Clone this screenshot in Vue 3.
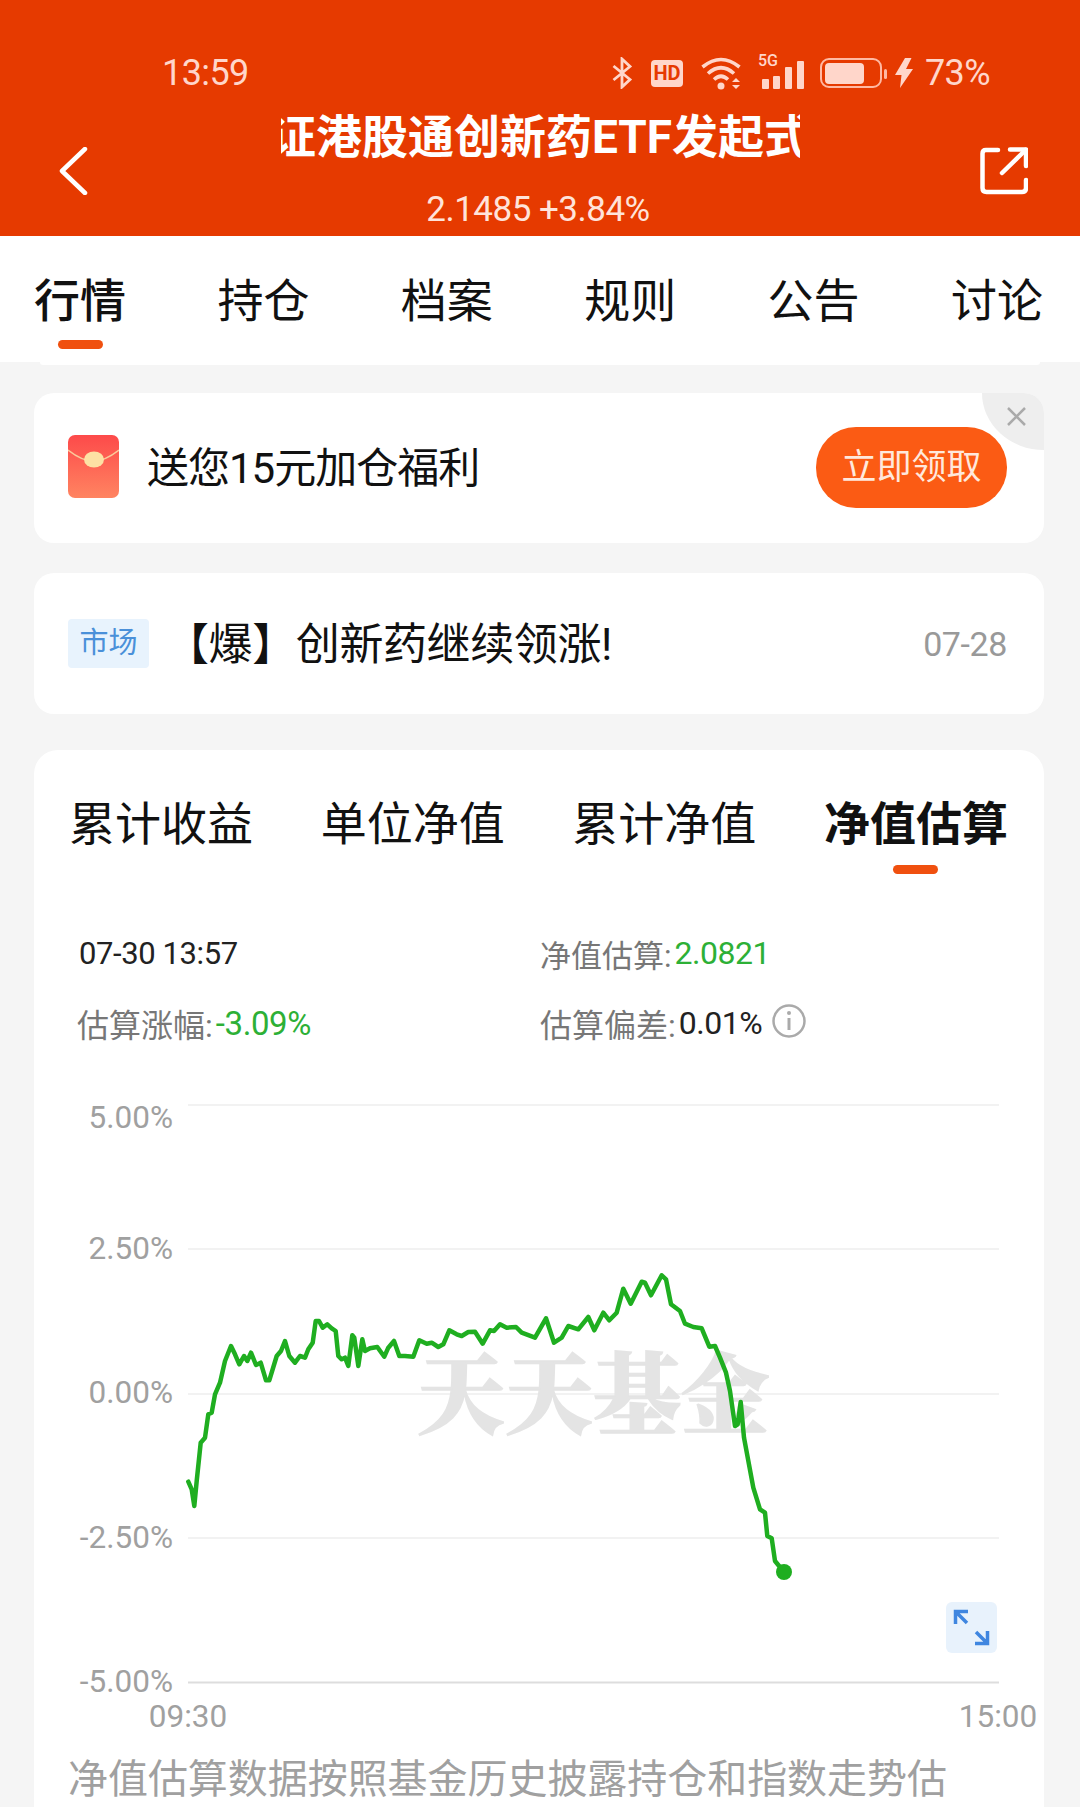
<script setup>
const tabs = ['行情', '持仓', '档案', '规则', '公告', '讨论']
const chartTabs = ['累计收益', '单位净值', '累计净值', '净值估算']

const left = [[55,722],[65,745],[73,795],[80,720],[92,605],[105,590],[115,520],[125,515],[135,460],[150,425],[165,360],[183,315],[195,340],[208,370],[222,345],[232,360],[243,335],[258,372],[272,365],[288,418],[298,418],[320,345],[333,330],[345,300],[358,345],[375,365],[390,345],[405,350],[415,325],[428,305],[437,240],[447,240],[458,260],[472,250],[485,262],[497,270],[505,345],[515,355],[525,350],[535,375],[547,283],[553,290],[565,375],[577,295],[585,330],[600,322],[622,318],[643,347],[655,320],[672,300],[688,345],[705,345],[730,347],[748,298],[770,308],[785,305],[805,318],[820,310],[838,268],[860,280],[875,285],[895,273]]
const right = [[15,272],[38,308],[60,268],[72,270],[90,250],[110,260],[138,258],[155,275],[195,290],[228,232],[252,305],[275,290],[295,255],[325,265],[355,228],[373,268],[400,215],[418,238],[440,215],[460,143],[482,188],[515,122],[525,125],[543,163],[575,103],[588,115],[603,190],[630,210],[645,248],[670,258],[695,262],[718,317],[735,315],[750,350],[768,395],[780,450],[795,555],[803,550],[812,483],[822,590],[850,740],[870,805],[885,815],[892,885],[905,892],[915,960],[942,993]]
const curve = [
  ...left.map(([x, y]) => [170 + x / 3, 1240 + y / 3]),
  ...right.map(([x, y]) => [470 + x / 3, 1240 + y / 3])
].map(([x, y]) => `${x.toFixed(1)},${y.toFixed(1)}`).join(' ')

const gridLines = [1104, 1248, 1393, 1537]
const axisLabels = [
  { text: '5.00%', y: 1116 },
  { text: '2.50%', y: 1247 },
  { text: '0.00%', y: 1391 },
  { text: '-2.50%', y: 1536 },
  { text: '-5.00%', y: 1680 }
]
</script>

<template>
  <div class="page">
    <header class="header">
      <div class="status">
        <span class="time">13:59</span>
        <div class="status-right">
          <svg class="s-bt" width="21" height="32" viewBox="0 0 21 32" fill="none" stroke="#ffd6ca" stroke-width="2.800">
            <path d="M1.500 9 L18 22.500 L10 30 V2 L18 9.500 L1.500 23" />
          </svg>
          <svg class="s-hd" width="32" height="27" viewBox="0 0 32 27">
            <rect width="32" height="27" rx="4" fill="#ffd6ca" />
            <text x="16" y="20" text-anchor="middle" class="hd-text">HD</text>
          </svg>
          <svg class="s-wifi" width="42" height="34" viewBox="0 0 42 34" fill="none" stroke="#ffd6ca" stroke-width="3.600">
            <path d="M1.500 11 Q20 -4 38.500 11" />
            <path d="M7 17.500 Q20 6 33 17.500" />
            <path d="M13 23.500 Q20 17 27 23.500" />
            <circle cx="20" cy="30" r="3.500" fill="#ffd6ca" stroke="none" />
            <path d="M35 22 L39 26 H31 Z M31 29 H39 L35 33 Z" fill="#ffd6ca" stroke="none" />
          </svg>
          <div class="s-signal">
            <span class="five-g">5G</span>
            <svg width="43" height="29" viewBox="0 0 43 29" fill="#ffd6ca">
              <rect x="0" y="19" width="7" height="10" rx="1" />
              <rect x="11" y="16" width="7" height="13" rx="1" />
              <rect x="23" y="7" width="7" height="22" rx="1" />
              <rect x="35" y="1" width="7" height="28" rx="1" />
            </svg>
          </div>
          <svg class="s-bat" width="67" height="30" viewBox="0 0 67 30" fill="none">
            <rect x="1" y="1" width="60" height="28" rx="8" stroke="#ffb9a3" stroke-width="2" />
            <rect x="5" y="5" width="39" height="21" rx="4" fill="#ffd6ca" />
            <rect x="64" y="11" width="3" height="10" rx="1.500" fill="#ffb9a3" />
          </svg>
          <svg class="s-flash" width="18" height="30" viewBox="0 0 18 30" fill="#ffd6ca">
            <path d="M10 0 L0 17 H6.500 L5 30 L18 11 H11 L16.500 0 Z" />
          </svg>
          <span class="pct">73%</span>
        </div>
      </div>
      <div class="nav">
        <svg class="nav-icon" width="48" height="48" viewBox="0 0 48 48" fill="none" stroke="#fff" stroke-width="4.500" stroke-linecap="round" stroke-linejoin="round">
          <path d="M33 2 L10 24 L33 46" />
        </svg>
        <div class="nav-mid">
          <div class="title"><span>证港股通创新药ETF发起式</span></div>
          <div class="sub">2.1485 +3.84%</div>
        </div>
        <svg class="nav-icon" width="48" height="48" viewBox="0 0 48 48" fill="none" stroke="#fff" stroke-width="4.500" stroke-linecap="round" stroke-linejoin="round">
          <path d="M18 3 H6 Q2.500 3 2.500 6.500 V41 Q2.500 45 6.500 45 H42 Q46 45 46 41 V33" />
          <path d="M22 26 L45.500 3" />
          <path d="M30 2.500 H46 V19" />
        </svg>
      </div>
    </header>

    <nav class="tabs">
      <div v-for="(t, i) in tabs" :key="t" class="tab" :class="{ on: i === 0 }">
        <span>{{ t }}</span>
        <i class="bar"></i>
      </div>
    </nav>
    <div class="lip"></div>

    <main class="main">
      <section class="card promo">
        <svg class="packet" width="51" height="63" viewBox="0 0 51 63">
          <defs>
            <linearGradient id="pk" x1="0" y1="0" x2="0" y2="1">
              <stop offset="0" stop-color="#fd4a4a" />
              <stop offset="1" stop-color="#ff8461" />
            </linearGradient>
          </defs>
          <rect width="51" height="63" rx="7" fill="url(#pk)" />
          <path d="M0 15 Q14 26 25.500 26 Q37 26 51 15" fill="none" stroke="#fbc99a" stroke-width="1.500" />
          <ellipse cx="26" cy="24.500" rx="10" ry="8" fill="#fde1a4" />
        </svg>
        <span class="promo-text">送您15元加仓福利</span>
        <button class="claim">立即领取</button>
        <div class="corner">
          <svg width="19" height="19" viewBox="0 0 19 19" stroke="#aaa" stroke-width="2.500" fill="none">
            <path d="M1 1 L18 18 M18 1 L1 18" />
          </svg>
        </div>
      </section>

      <section class="card news">
        <span class="tag">市场</span>
        <span class="news-text">【爆】创新药继续领涨!</span>
        <span class="date">07-28</span>
      </section>

      <section class="card chart-card">
        <div class="ctabs">
          <div v-for="(t, i) in chartTabs" :key="t" class="ctab" :class="{ on: i === 3 }">
            <span>{{ t }}</span>
            <i class="bar"></i>
          </div>
        </div>

        <div class="stats">
          <div class="stat dark stamp">07-30 13:57</div>
          <div class="stat est"><span class="lbl">净值估算:</span><span class="green">2.0821</span></div>
          <div class="stat wide"><span class="lbl">估算涨幅:</span><span class="green">-3.09%</span></div>
          <div class="stat">
            <span class="lbl">估算偏差:</span><span class="dark val">0.01%</span>
            <svg class="info" width="34" height="34" viewBox="0 0 34 34" fill="none" stroke="#aaa" stroke-width="2.500">
              <circle cx="17" cy="17" r="15.500" />
              <path d="M17 14 V26" stroke-width="3" />
              <circle cx="17" cy="9" r="2" fill="#aaa" stroke="none" />
            </svg>
          </div>
        </div>

        <svg class="chart" width="1010" height="650" viewBox="34 1090 1010 650">
          <line v-for="y in gridLines" :key="y" x1="188" x2="999" :y1="y" :y2="y" stroke="#eeeeee" stroke-width="1.500" />
          <line x1="188" x2="999" y1="1681.500" y2="1681.500" stroke="#dddddd" stroke-width="2" />
          <text x="417" y="1425" class="mark">天天基金</text>
          <text v-for="l in axisLabels" :key="l.text" x="173" :y="l.y + 11" text-anchor="end" class="axis">{{ l.text }}</text>
          <text x="188" y="1726" text-anchor="middle" class="axis">09:30</text>
          <text x="998" y="1726" text-anchor="middle" class="axis">15:00</text>
          <polyline :points="curve" fill="none" stroke="#1fae20" stroke-width="4.500" stroke-linejoin="round" stroke-linecap="round" />
          <circle cx="784" cy="1571" r="8" fill="#1fae20" />
          <rect x="946" y="1601" width="51" height="51" rx="6" fill="#e8f2fc" />
          <g fill="none" stroke="#3f86e0" stroke-width="3.500">
            <path d="M968 1610.500 H955.500 V1623 M955.500 1610.500 L967 1622" />
            <path d="M975 1642.500 H987.500 V1630 M987.500 1642.500 L976 1631" />
          </g>
        </svg>

        <p class="note">净值估算数据按照基金历史披露持仓和指数走势估</p>
      </section>
    </main>
  </div>
</template>

<style scoped>
.page {
  width: 1080px;
  height: 1807px;
  overflow: hidden;
  background: #f5f5f5;
  font-family: Roboto, "Noto Sans CJK SC", sans-serif;
  color: #111;
}
.header {
  height: 236px;
  background: #e63a00;
  box-sizing: border-box;
  padding-top: 53px;
}
.status {
  height: 40px;
  display: flex;
  align-items: center;
  padding: 0 90px 0 162px;
  justify-content: space-between;
  color: #ffd6ca;
}
.time, .pct {
  font-size: 36px;
  font-weight: 400;
  letter-spacing: -0.6px;
  line-height: 40px;
}
.status-right {
  display: flex;
  align-items: center;
}
.s-bt { margin-right: 18px; }
.s-hd { margin-right: 18px; }
.hd-text {
  font-size: 20px;
  font-weight: 700;
  fill: #e63a00;
}
.s-wifi { margin-right: 19px; }
.s-signal {
  position: relative;
  width: 43px;
  height: 29px;
  margin-right: 15px;
  margin-top: 3px;
}
.five-g {
  position: absolute;
  left: -4px;
  top: -7px;
  font-size: 16px;
  line-height: 15px;
  font-weight: 500;
}
.s-bat { margin-right: 8px; }
.s-flash { margin-right: 12px; }
.nav {
  height: 143px;
  display: flex;
  justify-content: space-between;
  padding: 0 52px;
}
.nav-icon {
  margin-top: 54px;
  flex: none;
}
.nav-mid {
  width: 519px;
  flex: none;
  text-align: center;
}
.title {
  margin-top: 14px;
  height: 60px;
  line-height: 60px;
  font-size: 46px;
  font-weight: 700;
  color: #fff;
  display: flex;
  justify-content: center;
  overflow: hidden;
  white-space: nowrap;
}
.title span { flex: none; }
.sub {
  margin-top: 23px;
  padding-right: 4px;
  line-height: 40px;
  font-size: 35px;
  font-weight: 400;
  letter-spacing: -0.5px;
  color: #ffe3da;
}
.tabs {
  height: 126px;
  box-sizing: border-box;
  background: #fff;
  display: flex;
  justify-content: space-between;
  padding: 41px 37px 0 34px;
}
.tab, .ctab {
  display: flex;
  flex-direction: column;
  align-items: center;
  font-size: 46px;
  line-height: 48px;
}
.bar {
  display: block;
  width: 45px;
  height: 9px;
  margin-top: 15px;
  border-radius: 5px;
  background: transparent;
}
.on .bar { background: #f0500f; }
.on { font-weight: 500; }
.lip {
  height: 3px;
  margin: 0 40px;
  background: #fff;
  border-radius: 0 0 8px 8px;
}
.main {
  padding: 28px 36px 0 34px;
  display: flex;
  flex-direction: column;
  gap: 30px;
}
.card {
  background: #fff;
  border-radius: 20px;
  position: relative;
}
.promo {
  height: 150px;
  display: flex;
  align-items: center;
  padding: 0 37px 0 34px;
  overflow: hidden;
}
.packet {
  flex: none;
  margin-right: 28px;
  margin-top: -3px;
}
.promo-text {
  font-size: 42px;
  line-height: 46px;
  margin-top: 1px;
  letter-spacing: -1px;
  font-weight: 400;
}
.claim {
  margin-left: auto;
  width: 191px;
  height: 81px;
  border: 0;
  padding: 0;
  border-radius: 40px;
  background: #fb5b14;
  color: #ffe8dc;
  font-family: inherit;
  font-size: 35px;
  line-height: 79px;
  margin-top: -1px;
}
.corner {
  position: absolute;
  right: 0;
  top: 0;
  width: 62px;
  height: 57px;
  background: #eeeeee;
  border-bottom-left-radius: 100%;
}
.corner svg {
  position: absolute;
  left: 25px;
  top: 14px;
}
.news {
  height: 141px;
  display: flex;
  align-items: center;
  padding: 0 37px 0 34px;
}
.tag {
  width: 81px;
  height: 49px;
  line-height: 49px;
  text-align: center;
  background: #e8f3fd;
  color: #4a90d9;
  font-size: 29px;
  border-radius: 4px;
  margin-right: 16px;
}
.news-text {
  font-size: 44px;
  line-height: 48px;
  margin-top: 3px;
  letter-spacing: -0.4px;
  font-weight: 400;
}
.date {
  margin-left: auto;
  color: #999;
  font-size: 34px;
  font-weight: 400;
  letter-spacing: -0.4px;
}
.chart-card {
  margin-top: 6px;
  height: 1100px;
  border-radius: 24px;
}
.ctabs {
  display: flex;
  justify-content: space-between;
  padding: 49px 36px 0 35px;
}
.ctab { line-height: 50px; }
.ctab .bar { margin-top: 16px; }
.ctab.on { font-weight: 700; }
.stats {
  margin-top: 59px;
  padding-left: 45px;
  display: grid;
  grid-template-columns: 461px 1fr;
  row-gap: 30px;
}
.stat {
  display: flex;
  align-items: center;
  height: 40px;
  font-size: 32px;
  font-weight: 400;
  letter-spacing: -0.3px;
}
.stat.wide { margin-left: -2px; }
.stamp {
  font-size: 31px;
  letter-spacing: -0.4px;
}
.lbl { color: #777; letter-spacing: 0; margin-right: 3px; }
.est .lbl { font-size: 31px; }
.green { color: #2db036; font-size: 33px; letter-spacing: -0.4px; }
.est .green { font-size: 32px; letter-spacing: -0.5px; }
.dark { color: #222; }
.val { font-size: 32px; letter-spacing: -0.5px; }
.info { margin-left: 10px; margin-top: -4px; }
.chart {
  display: block;
  margin-top: 48px;
}
.axis {
  font-size: 31.500px;
  font-weight: 400;
  fill: #a0a0a0;
}
.mark {
  font-size: 88px;
  font-weight: 900;
  fill: #e4e4e4;
  stroke: #e4e4e4;
  stroke-width: 1.500px;
  font-family: "Noto Serif CJK SC", "Noto Sans CJK SC", serif;
}
.note {
  margin: 17px 0 0 34px;
  font-size: 40px;
  line-height: 44px;
  font-weight: 400;
  letter-spacing: -0.05px;
  color: #a0a0a0;
  white-space: nowrap;
}
</style>
